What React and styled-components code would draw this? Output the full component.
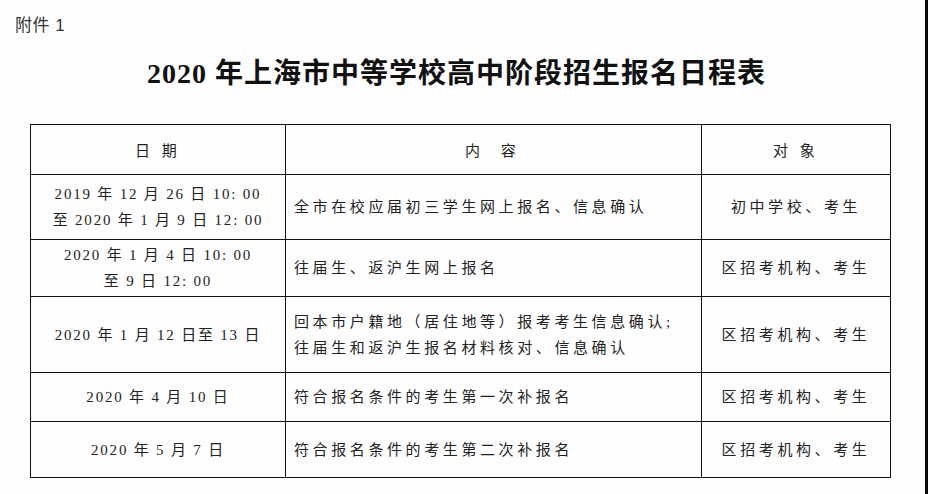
import React from "react";
import styled, { createGlobalStyle } from "styled-components";

const GlobalStyle = createGlobalStyle`
  html, body {
    margin: 0;
    padding: 0;
    background: #ffffff;
  }
`;

const rows = [
  {
    height: 65,
    date: ["2019 年 12 月 26 日 10: 00", "至 2020 年 1 月 9 日 12: 00"],
    content: ["全市在校应届初三学生网上报名、信息确认"],
    target: "初中学校、考生",
  },
  {
    height: 57,
    date: ["2020 年 1 月 4 日 10: 00", "至 9 日 12: 00"],
    content: ["往届生、返沪生网上报名"],
    target: "区招考机构、考生",
  },
  {
    height: 76,
    date: ["2020 年 1 月 12 日至 13 日"],
    content: [
      "回本市户籍地（居住地等）报考考生信息确认;",
      "往届生和返沪生报名材料核对、信息确认",
    ],
    target: "区招考机构、考生",
  },
  {
    height: 49,
    date: ["2020 年 4 月 10 日"],
    content: ["符合报名条件的考生第一次补报名"],
    target: "区招考机构、考生",
  },
  {
    height: 56,
    date: ["2020 年 5 月 7 日"],
    content: ["符合报名条件的考生第二次补报名"],
    target: "区招考机构、考生",
  },
];

function App() {
  return (
    <>
      <GlobalStyle />
      <Page>
        <Note>附件 1</Note>
        <Title>2020 年上海市中等学校高中阶段招生报名日程表</Title>
        <Schedule>
          <colgroup>
            <col style={{ width: 255 }} />
            <col style={{ width: 416 }} />
            <col style={{ width: 189 }} />
          </colgroup>
          <thead>
            <Row $h={50}>
              <Head>日 期</Head>
              <Head $wide>内 容</Head>
              <Head>对 象</Head>
            </Row>
          </thead>
          <tbody>
            {rows.map((r, i) => (
              <Row key={i} $h={r.height}>
                <DateCell>
                  {r.date.map((line, j) => (
                    <Line key={j}>{line}</Line>
                  ))}
                </DateCell>
                <Cell>
                  {r.content.map((line, j) => (
                    <Line key={j}>{line}</Line>
                  ))}
                </Cell>
                <Cell $center>{r.target}</Cell>
              </Row>
            ))}
          </tbody>
        </Schedule>
      </Page>
    </>
  );
}

const Page = styled.div`
  box-sizing: border-box;
  width: 928px;
  height: 494px;
  padding: 14px 0 0 0;
  border-right: 3px solid #0a0a0a;
  display: flex;
  flex-direction: column;
  align-items: flex-start;
  background: #fefefe;
`;

const Note = styled.div`
  margin-left: 15px;
  font-family: "Liberation Sans", "Noto Sans CJK SC", sans-serif;
  font-size: 17px;
  line-height: 24px;
  color: #333333;
  letter-spacing: 0.5px;
`;

const Title = styled.h1`
  align-self: stretch;
  margin: 16px 0 30px 0;
  padding-right: 12px;
  text-align: center;
  font-family: "Liberation Serif", "Noto Sans CJK SC", serif;
  font-size: 28px;
  font-weight: 700;
  line-height: 40px;
  letter-spacing: 1px;
  color: #111111;
`;

const Schedule = styled.table`
  margin-left: 30px;
  width: 861px;
  border-collapse: collapse;
  table-layout: fixed;
  font-family: "Liberation Serif", "Noto Sans CJK SC", serif;
  font-size: 15px;
  color: #222222;
`;

const Row = styled.tr`
  height: ${(p) => p.$h}px;
`;

const Head = styled.th`
  border: 1px solid #111111;
  padding: 0;
  font-weight: 400;
  text-align: center;
  letter-spacing: ${(p) => (p.$wide ? "6px" : "4px")};
  word-spacing: ${(p) => (p.$wide ? "5px" : "0px")};
`;

const Cell = styled.td`
  border: 1px solid #111111;
  padding: 0 6px 0 ${(p) => (p.$center ? "6px" : "8px")};
  text-align: ${(p) => (p.$center ? "center" : "left")};
  vertical-align: middle;
  letter-spacing: 3.6px;
  line-height: 26px;
  white-space: nowrap;
`;

const DateCell = styled(Cell)`
  text-align: center;
  padding: 0 4px;
  letter-spacing: 1.8px;
`;

const Line = styled.div`
  line-height: 26px;
`;

export default App;
